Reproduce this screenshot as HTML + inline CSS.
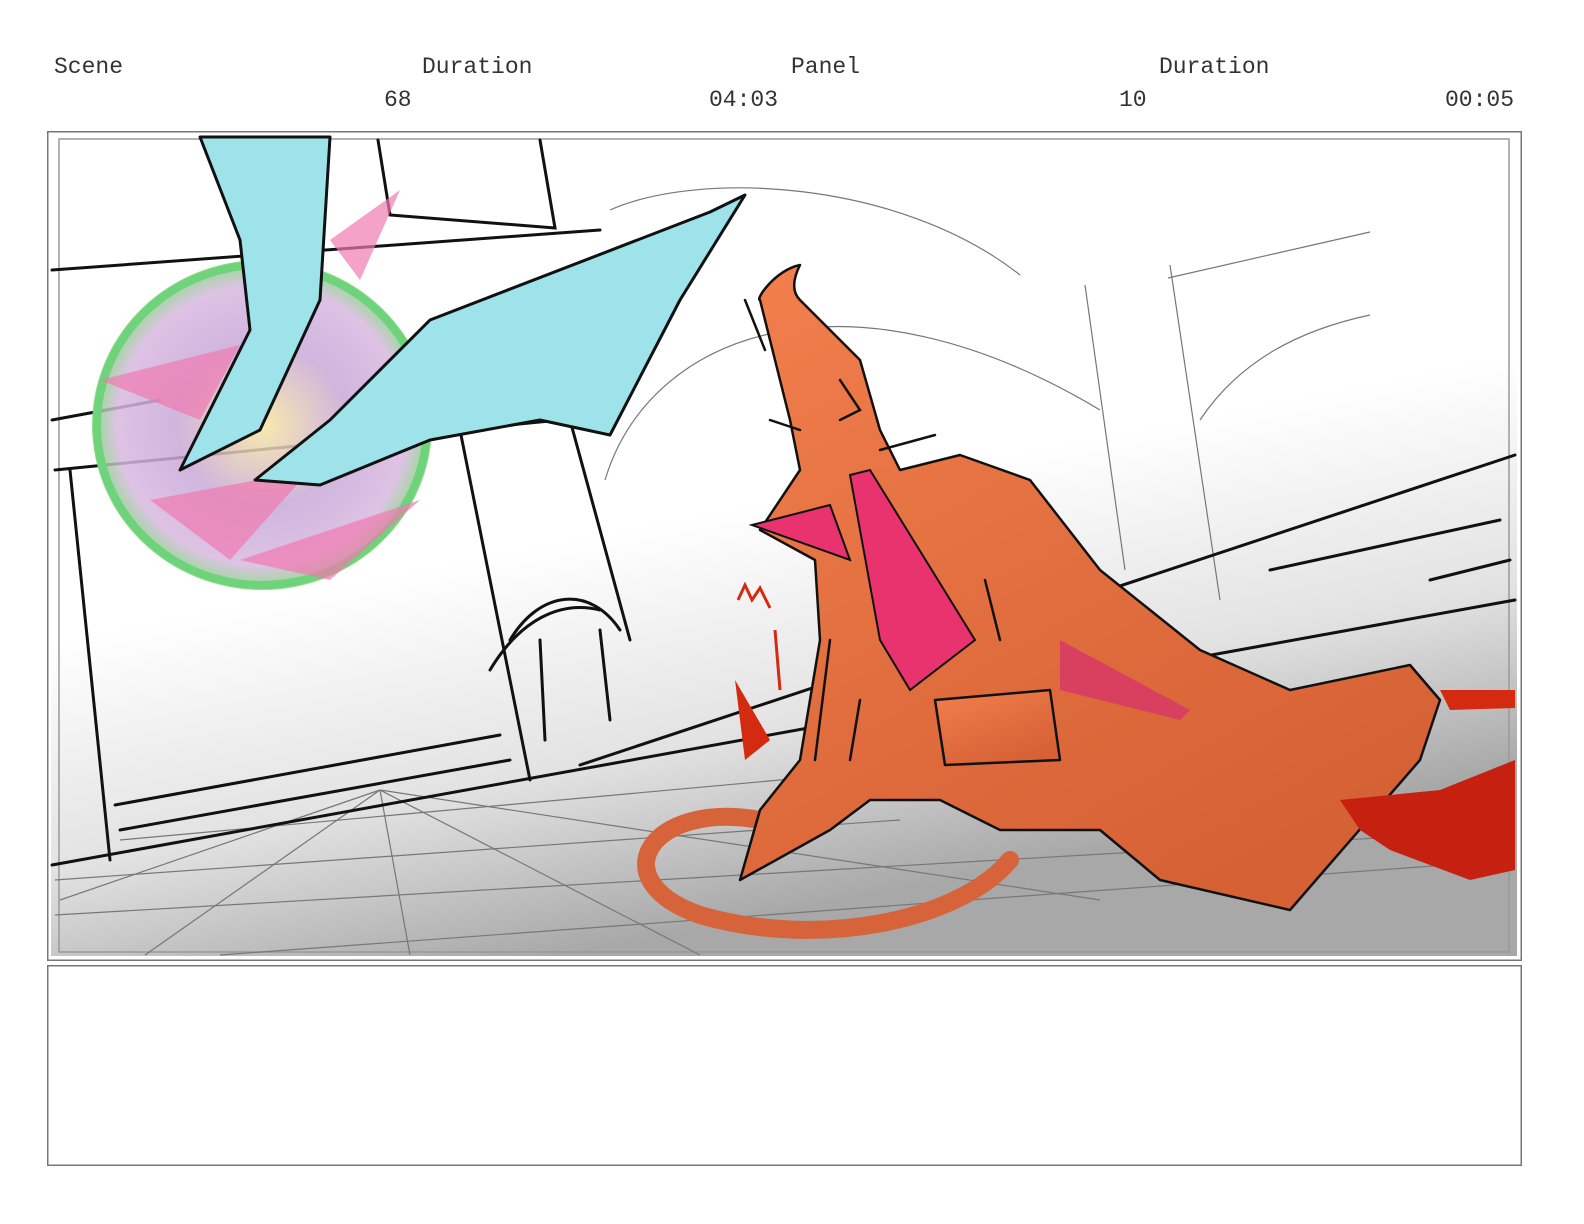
<!DOCTYPE html>
<html><head><meta charset="utf-8">
<style>
html,body{margin:0;padding:0;background:#fff;width:1584px;height:1224px;overflow:hidden;}
body{position:relative;font-family:"Liberation Mono",monospace;}
.t{position:absolute;font-size:23px;color:#333;line-height:1;white-space:pre;}
.box{position:absolute;border:1.5px solid #777;box-sizing:border-box;}
svg{display:block;}
</style></head><body>
<div class="t" style="left:54px;top:56px">Scene</div>
<div class="t" style="left:422px;top:56px">Duration</div>
<div class="t" style="left:791px;top:56px">Panel</div>
<div class="t" style="left:1159px;top:56px">Duration</div>
<div class="t" style="left:384px;top:89px">68</div>
<div class="t" style="left:709px;top:89px">04:03</div>
<div class="t" style="left:1119px;top:89px">10</div>
<div class="t" style="left:1445px;top:89px">00:05</div>

<svg style="position:absolute;left:0;top:0" width="1584" height="1224" viewBox="0 0 1584 1224">
<defs>
<linearGradient id="bg" x1="0" y1="0" x2="0.35" y2="1">
<stop offset="0" stop-color="#fff"/><stop offset="0.55" stop-color="#fff"/><stop offset="0.8" stop-color="#e2e2e2"/><stop offset="1" stop-color="#a8a8a8"/></linearGradient>
<linearGradient id="org" x1="0" y1="0" x2="0.6" y2="1">
<stop offset="0" stop-color="#f27f4c"/><stop offset="1" stop-color="#d56135"/></linearGradient>
<radialGradient id="orb" cx="0.5" cy="0.5" r="0.5">
<stop offset="0" stop-color="#f7e6a0"/><stop offset="0.5" stop-color="#c8a8d8"/><stop offset="0.85" stop-color="#d8b8e0"/><stop offset="1" stop-color="#7fd67a"/></radialGradient>
</defs>
<rect x="51" y="135" width="1466" height="821" fill="url(#bg)"/>
<rect x="59" y="139" width="1450" height="813" fill="none" stroke="#999" stroke-width="1.5"/>
<rect x="47.75" y="131.75" width="1473.5" height="828.5" fill="none" stroke="#777" stroke-width="1.5"/>
<rect x="47.75" y="965.75" width="1473.5" height="199.5" fill="none" stroke="#777" stroke-width="1.5"/>
<g stroke="#777" stroke-width="1.2" fill="none">
<path d="M380 790 L410 955 M380 790 L145 955 M380 790 L700 955 M380 790 L60 900 M380 790 L1100 900"/>
<path d="M55 915 L1515 830 M55 880 L900 820 M220 955 L1515 860 M120 840 L1000 760"/>
<path d="M610 210 C700 170 900 180 1020 275 M605 480 C650 330 850 260 1100 410"/>
<path d="M1085 285 L1125 570 M1170 265 L1220 600 M1168 278 L1370 232 M1200 420 C1240 360 1300 330 1370 315"/>
</g>
<g stroke="#111" stroke-width="3" fill="none" stroke-linecap="round">
<path d="M52 270 L600 230 M52 420 L160 400 M55 470 L560 420 M70 470 L110 860 M52 865 L1515 600"/>
<path d="M115 805 L500 735 M580 765 L1515 455 M120 830 L510 760 M460 430 L530 780 M570 420 L630 640"/>
<path d="M490 670 C520 620 560 600 600 610 M510 640 C540 590 590 585 620 630 M540 640 L545 740 M600 630 L610 720"/>
<path d="M378 140 L390 215 L555 228 L540 140 M1270 570 L1500 520 M1430 580 L1510 560"/>
</g>
<ellipse cx="262" cy="425" rx="170" ry="165" fill="url(#orb)" opacity="0.85"/>
<ellipse cx="262" cy="425" rx="165" ry="160" fill="none" stroke="#6ed37a" stroke-width="8"/>
<g fill="#f07ab0" opacity="0.7">
<path d="M100 380 L240 345 L200 420Z"/><path d="M150 500 L310 470 L230 560Z"/><path d="M330 240 L400 190 L360 280Z"/><path d="M240 560 L420 500 L330 580Z"/>
</g>
<g fill="#9ee3ea" stroke="#111" stroke-width="3" stroke-linejoin="round">
<path d="M200 137 L330 137 L320 300 L260 430 L180 470 L250 330 L240 240Z"/>
<path d="M745 195 L710 212 L430 320 L330 420 L255 480 L320 485 L430 440 L540 420 L610 435 L680 300Z"/>
</g>
<path d="M760 820 C650 800 600 880 700 915 C820 950 960 920 1010 860" fill="none" stroke="#d7633a" stroke-width="18" stroke-linecap="round"/>
<g fill="url(#org)" stroke="#111" stroke-width="2.5" stroke-linejoin="round">
<path d="M800 265 C775 270 755 300 760 300 L775 360 L790 420 L800 470 L760 530 L815 560 L820 640 L800 760 L760 810 L740 880 L830 830 L870 800 L940 800 L1000 830 L1100 830 L1160 880 L1290 910 L1420 760 L1440 700 L1410 665 L1290 690 L1200 650 L1100 570 L1030 480 L960 455 L900 470 L880 430 L860 360 L830 330 L800 300 C790 290 795 275 800 265Z"/>
<path d="M935 700 L1050 690 L1060 760 L945 765Z"/>
</g>
<g stroke="#111" stroke-width="2.5" fill="none" stroke-linecap="round">
<path d="M745 300 L765 350 M840 380 L860 410 L840 420 M770 420 L800 430 M880 450 L935 435 M830 640 L815 760 M860 700 L850 760 M985 580 L1000 640"/>
</g>
<g fill="#e9336f" stroke="#111" stroke-width="2">
<path d="M752 525 L830 505 L850 560Z"/>
<path d="M850 475 L870 470 L975 640 L910 690 L880 640Z"/>
<path d="M1060 640 L1190 710 L1180 720 L1060 690Z" fill="#d94060" stroke="none"/>
</g>
<g fill="#d42a10">
<path d="M735 680 L770 740 L745 760Z"/>
<path d="M1440 690 L1515 690 L1515 708 L1450 710Z"/>
<path d="M1340 800 L1440 790 L1515 760 L1515 870 L1470 880 L1390 850 L1360 830Z" fill="#c52010"/>
</g>
<path d="M738 600 L745 585 L752 600 L760 588 L770 608 M775 630 L780 690" stroke="#d42a10" stroke-width="3" fill="none"/>
</svg>
</body></html>
